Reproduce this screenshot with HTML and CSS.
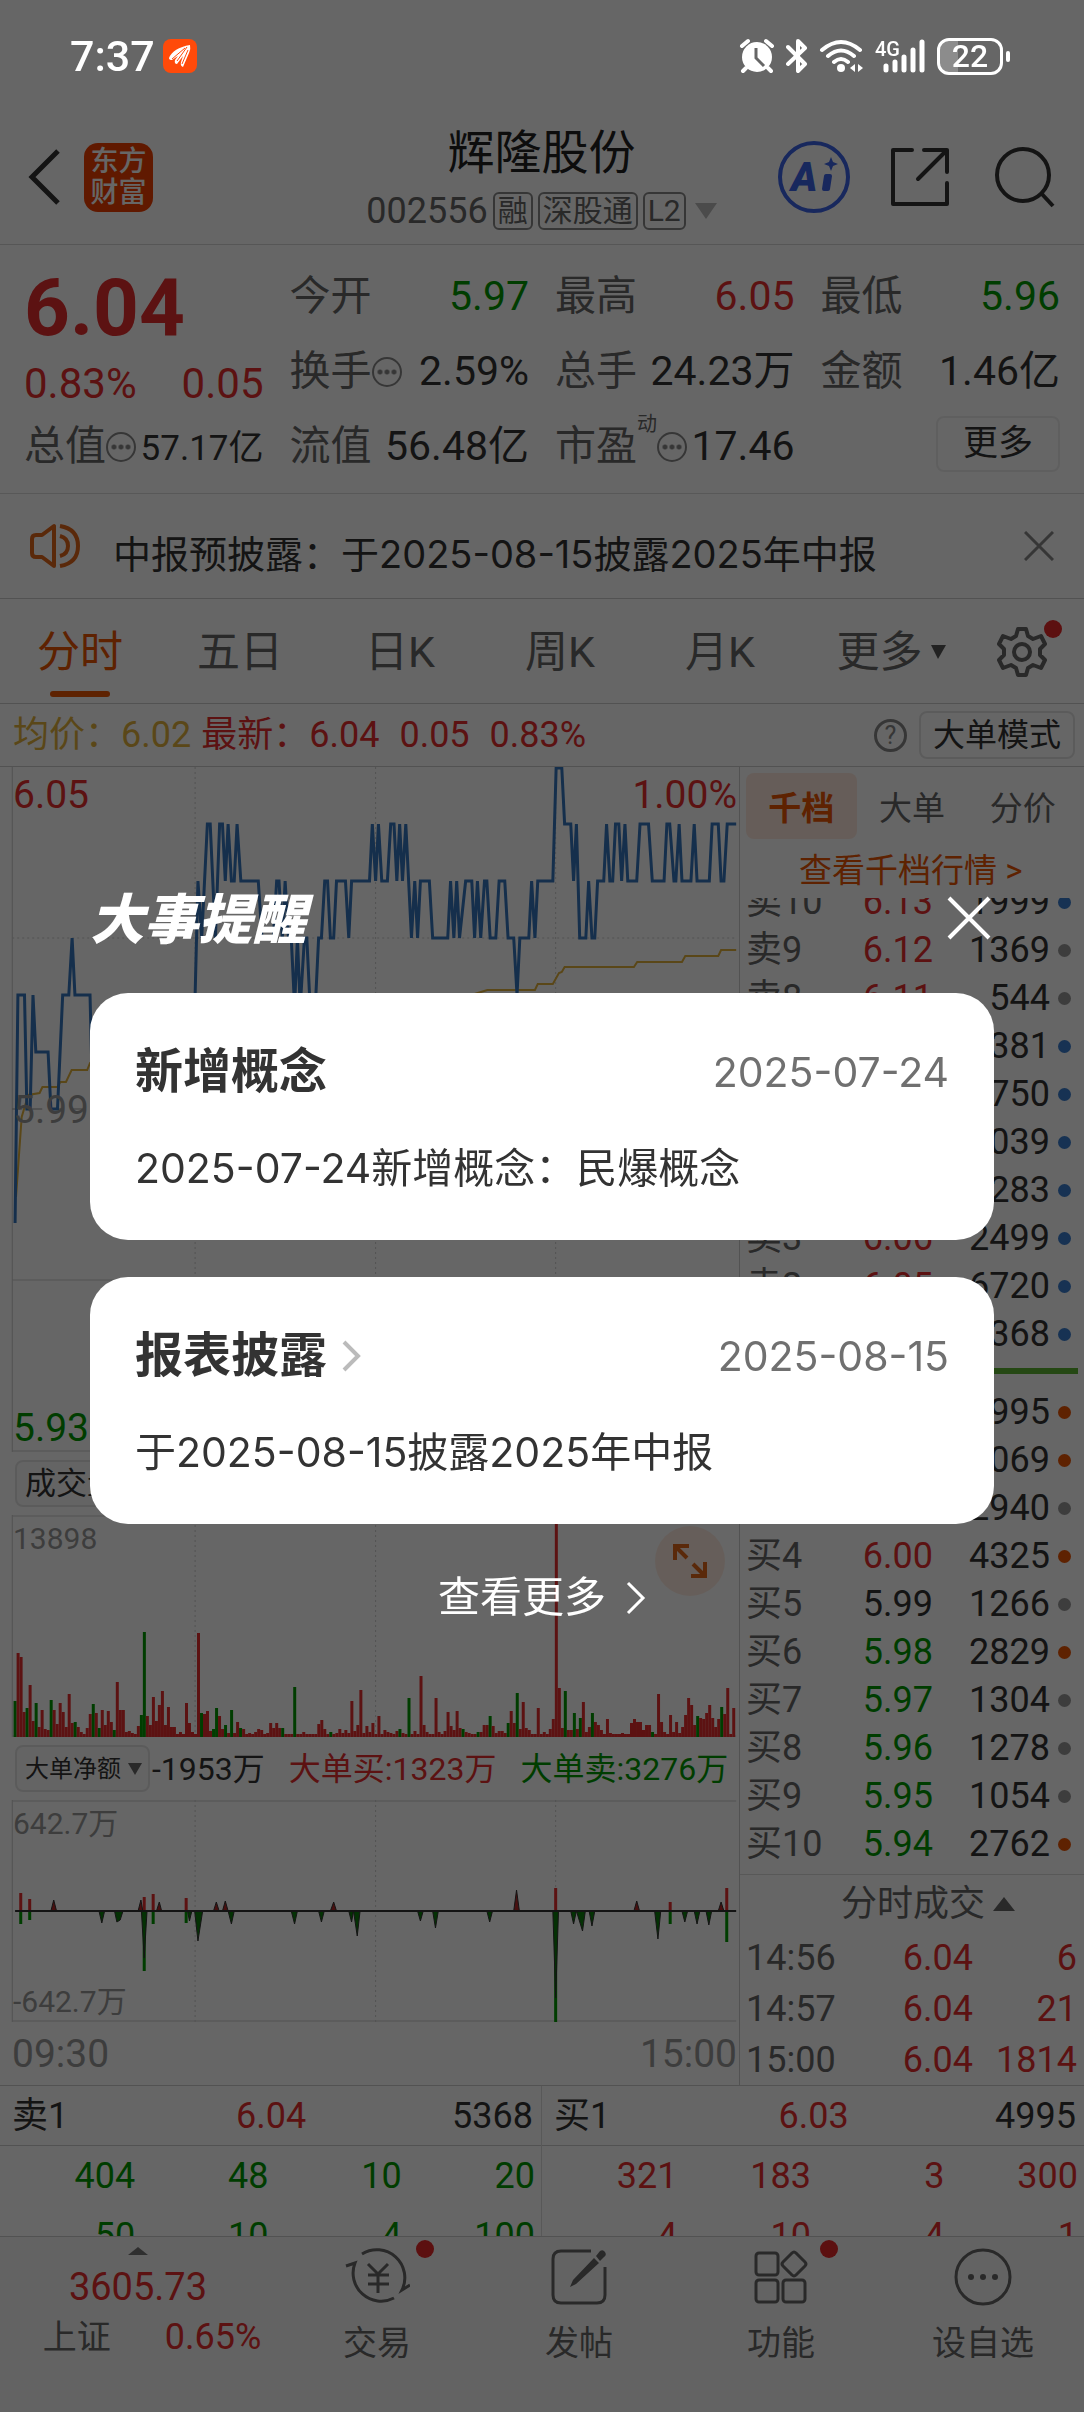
FILE: index.html
```html
<!DOCTYPE html>
<html lang="zh-CN">
<head>
    <meta charset="UTF-8">
    <meta name="viewport" content="width=device-width, initial-scale=1.0">
    <title>辉隆股份 002556</title>
    <link rel="stylesheet" href="styles.css">
</head>
<body>

<div class="status-bar">
    <span class="clock">7:37</span>
    <svg class="app-badge" width="34" height="34" viewBox="0 0 34 34">
        <rect width="34" height="34" rx="8" fill="#ff4a0a"/>
        <path d="M6 19 Q10 9 27 6 Q28 10 26 14 L20 28 Q17 27 18 23 L20 17 L14 25 Q11 25 12 21 L15 17 L9 21 Q6 21 6 19Z" fill="#fff"/>
        <path d="M14 22 L24 8 M19 25 L25 11 M9 20 L22 9" stroke="#ff4a0a" stroke-width="1" fill="none"/>
    </svg>
    <span class="spacer"></span>
    <svg width="36" height="36" viewBox="0 0 36 36">
        <circle cx="18" cy="19" r="15" fill="#fff"/>
        <path d="M3 8 L9 3 M27 3 L33 8 M7 30 L4 33 M29 30 L32 33" stroke="#fff" stroke-width="4" stroke-linecap="round"/>
        <path d="M17 10 V20 L25 28" stroke="#666" stroke-width="3" fill="none"/>
    </svg>
    <svg class="bt" width="22" height="36" viewBox="0 0 22 36">
        <path d="M2 9 L19 26 L12 33 V3 L19 10 L2 26" stroke="#fff" stroke-width="4" fill="none" stroke-linecap="round" stroke-linejoin="round"/>
    </svg>
    <svg width="46" height="36" viewBox="0 0 46 36">
        <path d="M3 12 Q22 -4 41 12 M9 18 Q22 7 35 18 M15 24 Q22 18 29 24" stroke="#fff" stroke-width="4" fill="none" stroke-linecap="round"/>
        <circle cx="22" cy="30" r="4" fill="#fff"/>
        <path d="M36 26 V34 L31 30Z M39 34 V26 L44 30Z" fill="#fff"/>
    </svg>
    <svg class="signal" width="52" height="36" viewBox="0 0 52 36">
        <text x="0" y="18" font-size="20" font-weight="500" fill="#fff">4G</text>
        <path d="M11 28 V32 M20 24 V32 M29 19 V32 M38 12 V32 M47 4 V32" stroke="#fff" stroke-width="5" stroke-linecap="round"/>
    </svg>
    <span class="battery">22</span>
</div>

<div class="app">
    <header class="top">
        <button class="icon-btn back" aria-label="返回">
            <svg width="34" height="58" viewBox="0 0 34 58"><path d="M30 3 L4 29 L30 55" stroke="#333" stroke-width="5" fill="none"/></svg>
        </button>
        <a class="logo" href="#">东方<br>财富</a>
        <div class="title">
            <h1>辉隆股份</h1>
            <p class="code">
                <span>002556</span>
                <span class="badge">融</span><span class="badge">深股通</span><span class="badge">L2</span>
                <svg width="22" height="16" viewBox="0 0 22 16"><path d="M0 0 H22 L11 16Z" fill="#bbb"/></svg>
            </p>
        </div>
        <button class="icon-btn ai" aria-label="AI">
            <svg width="72" height="72" viewBox="0 0 72 72">
                <circle cx="36" cy="36" r="34" fill="none" stroke="#3c64e8" stroke-width="4"/>
                <text x="13" y="50" font-size="40" font-weight="900" font-style="italic" fill="#3c64e8">A</text>
                <path d="M46 48 L48 35 H52 L50 48Z" fill="#3c64e8" stroke="#3c64e8" stroke-width="4" stroke-linejoin="round"/>
                <path d="M53 16 L55 21 L60 23 L55 25 L53 30 L51 25 L46 23 L51 21Z" fill="#3c64e8"/>
            </svg>
        </button>
        <button class="icon-btn" aria-label="分享">
            <svg width="60" height="60" viewBox="0 0 60 60"><path d="M22 3 H3 V57 H57 V36 M34 3 H57 V25 M57 3 L28 32" stroke="#333" stroke-width="4" fill="none" stroke-linejoin="round" stroke-linecap="round"/></svg>
        </button>
        <button class="icon-btn" aria-label="搜索">
            <svg width="62" height="62" viewBox="0 0 62 62"><circle cx="29" cy="29" r="26" stroke="#333" stroke-width="4" fill="none"/><path d="M47 47 L59 60" stroke="#333" stroke-width="4"/></svg>
        </button>
    </header>

    <section class="quote">
        <div class="now">
            <strong>6.04</strong>
            <p><span>0.83%</span><span>0.05</span></p>
        </div>
        <p class="cell"><span>今开</span><b class="down">5.97</b></p>
        <p class="cell"><span>最高</span><b class="up">6.05</b></p>
        <p class="cell"><span>最低</span><b class="down">5.96</b></p>
        <p class="cell"><span>换手<i class="dots"></i></span><b>2.59%</b></p>
        <p class="cell"><span>总手</span><b>24.23万</b></p>
        <p class="cell"><span>金额</span><b>1.46亿</b></p>
        <p class="cell"><span>总值<i class="dots"></i></span><b class="small">57.17亿</b></p>
        <p class="cell"><span>流值</span><b>56.48亿</b></p>
        <p class="cell"><span>市盈<sup>动</sup><i class="dots"></i></span><b>17.46</b></p>
        <p class="cell end"><button class="more">更多</button></p>
    </section>

    <section class="notice">
        <svg width="52" height="46" viewBox="0 0 52 46" fill="none" stroke="#e2661a" stroke-width="4">
            <path d="M24 3 V43 L12 34 H6 Q2 34 2 30 V16 Q2 12 6 12 H12 Z" stroke-linejoin="round"/>
            <path d="M30 13 Q38 15 38 23 Q38 31 30 33 M30 3 Q48 6 48 23 Q48 40 30 43"/>
        </svg>
        <p>中报预披露：于2025-08-15披露2025年中报</p>
        <button class="icon-btn" aria-label="关闭公告">
            <svg width="30" height="30" viewBox="0 0 30 30"><path d="M1 1 L29 29 M29 1 L1 29" stroke="#888" stroke-width="3"/></svg>
        </button>
    </section>

    <nav class="tabs">
        <a class="active" href="#">分时</a>
        <a href="#">五日</a>
        <a href="#">日K</a>
        <a href="#">周K</a>
        <a href="#">月K</a>
        <a class="tab-more" href="#">更多<svg width="15" height="14" viewBox="0 0 15 14"><path d="M0 0 H15 L7 14Z" fill="#555"/></svg></a>
        <button class="icon-btn gear" aria-label="设置">
            <svg width="52" height="52" viewBox="0 0 52 52" fill="none" stroke="#666" stroke-width="4">
                <path d="M22 3 H30 L32 10 L37 13 L45 10 L49 18 L44 23 V29 L49 34 L45 42 L37 39 L32 42 L30 49 H22 L20 42 L15 39 L7 42 L3 34 L8 29 V23 L3 18 L7 10 L15 13 L20 10Z" stroke-linejoin="round"/>
                <circle cx="26" cy="26" r="8"/>
            </svg>
            <span class="red-dot"></span>
        </button>
    </nav>

    <section class="summary">
        <span class="avg">均价：6.02</span>
        <span class="latest">最新：6.04</span>
        <span class="latest">0.05</span>
        <span class="latest">0.83%</span>
        <span class="help">?</span>
        <button>大单模式</button>
    </section>

    <main>
        <div class="charts">
            <div class="chart price">
                <svg viewBox="0 0 1568 685" preserveAspectRatio="none">
                    <g class="grid-lines">
                        <path d="M414 0 V685 M797 0 V685 M1179 0 V685 M26 171 H1562" stroke-dasharray="2 3"/>
                        <path d="M26 0 V685 M26 513 H1562 M26 684 H1562"/>
                    </g>
                    <path class="mid-line" d="M26 342 H1562"/>
                    <path class="avg-line" d="M34 430 L46 350 L60 328 L84 326 L90 320 L122 320 L128 315 L140 315 L152 303 L185 303 L191 296 L300 280 L420 262 L700 240 L1000 228 L1034 223 L1135 223 L1141 217 L1173 217 L1186 206 L1192 205 L1198 200 L1345 200 L1352 195 L1447 195 L1454 189 L1524 189 L1530 183 L1562 183"/>
                    <path class="price-line" d="M32 456 L38 228 L52 228 L57 342 L64 342 L70 228 L76 285 L102 285 L108 342 L122 342 L133 228 L146 228 L153 171 L159 228 L191 228 L197 342 L400 342 L414 228 L420 114 L428 171 L440 57 L446 57 L457 171 L466 57 L472 57 L478 114 L484 57 L491 114 L497 114 L503 57 L511 114 L548 114 L556 171 L580 171 L587 114 L592 114 L599 171 L605 114 L612 171 L618 171 L625 240 L631 171 L637 240 L646 171 L651 171 L658 240 L669 240 L676 171 L682 171 L689 114 L695 114 L701 171 L708 171 L714 114 L733 114 L740 171 L746 114 L784 114 L790 57 L797 114 L803 57 L810 114 L822 114 L829 57 L836 57 L842 114 L848 57 L854 114 L861 57 L873 171 L880 114 L886 171 L892 114 L911 114 L918 171 L950 171 L956 114 L963 171 L969 114 L975 171 L988 114 L1001 114 L1007 171 L1013 114 L1020 171 L1028 114 L1033 114 L1040 171 L1052 171 L1059 114 L1071 114 L1078 171 L1090 171 L1097 228 L1103 171 L1122 171 L1128 114 L1135 171 L1141 114 L1173 114 L1180 1 L1192 1 L1198 57 L1211 57 L1217 114 L1223 57 L1230 171 L1243 171 L1249 114 L1256 171 L1262 171 L1268 114 L1281 114 L1287 57 L1294 114 L1300 114 L1306 57 L1313 57 L1319 114 L1326 57 L1332 114 L1351 114 L1358 57 L1376 57 L1384 114 L1409 114 L1415 57 L1421 57 L1430 114 L1434 114 L1441 57 L1447 114 L1466 114 L1473 57 L1479 114 L1505 114 L1511 57 L1524 57 L1530 114 L1536 114 L1543 57 L1562 57"/>
                </svg>
                <span class="mark top-left up">6.05</span>
                <span class="mark top-right up">1.00%</span>
                <span class="mark middle">5.99</span>
                <span class="mark bottom-left down">5.93</span>
            </div>
            <div class="chart-bar">
                <button class="volume-btn">成交量 <i class="caret"></i></button>
            </div>
            <div class="chart volume">
                <svg id="volume" viewBox="0 0 1568 222" preserveAspectRatio="none">
                    <g class="grid-lines">
                        <path d="M414 0 V222 M797 0 V222 M1179 0 V222" stroke-dasharray="2 3"/>
                        <path d="M26 0 V222 M26 1 H1562 M26 221 H1562"/>
                    </g>
                </svg>
                <span class="mark small top-left">13898</span>
                <button class="expand" aria-label="展开">
                    <svg width="34" height="34" viewBox="0 0 34 34" fill="none" stroke="#e2661a" stroke-width="4"><path d="M2 16 V2 H16 M2 2 L14 14 M32 18 V32 H18 M32 32 L20 20"/></svg>
                </button>
            </div>
            <div class="chart-bar">
                <button>大单净额 <i class="caret"></i></button>
                <span>-1953万</span>
                <span class="up">大单买:1323万</span>
                <span class="down">大单卖:3276万</span>
            </div>
            <div class="chart flow">
                <svg viewBox="0 0 1568 222" preserveAspectRatio="none">
                    <g class="grid-lines">
                        <path d="M414 0 V222 M797 0 V222 M1179 0 V222" stroke-dasharray="2 3"/>
                        <path d="M26 0 V222 M26 1 H1562 M26 221 H1562"/>
                    </g>
                    <path class="buy" d="M44 111 V93 M63 111 V99 M306 111 V97 M325 111 V94 M395 111 V98 M1179 111 V88 M1422 111 V102 M1542 111 V88"/>
                    <path class="sell" d="M44 111 V124 M63 111 V120 M306 111 V171 M325 111 V124 M395 111 V123 M1179 111 V222 M1422 111 V124 M1542 111 V142"/>
                    <path class="net-buy" d="M108 111 L114 100 L120 111 M293 111 L299 100 L303 111 M332 111 L338 102 L343 111 M453 111 L459 102 L465 111 M472 111 L478 101 L484 111 M701 111 L708 102 L714 111 M1090 111 L1096 90 L1102 111 M1345 111 L1351 101 L1357 111 M1524 111 L1530 102 L1536 111"/>
                    <path class="net-sell" d="M210 111 L216 123 L222 111 M243 111 L248 122 L255 120 L261 111 M300 111 L306 158 L312 111 M398 111 L402 121 L407 111 M413 111 L420 141 L430 111 M484 111 L491 124 L497 111 M618 111 L625 124 L631 111 M676 111 L682 122 L688 111 M740 111 L746 122 L750 111 L758 136 L764 111 M886 111 L892 121 L898 111 M918 111 L924 128 L930 111 M1033 111 L1039 122 L1045 111 M1173 111 L1179 198 L1185 111 M1211 111 L1217 124 L1223 111 L1236 131 L1242 111 M1250 111 L1256 126 L1262 111 M1389 111 L1396 139 L1402 111 M1447 111 L1453 122 L1459 111 M1473 111 L1479 124 L1485 111 M1498 111 L1504 125 L1510 111"/>
                    <path class="zero-line" d="M32 111 H1562"/>
                </svg>
                <span class="mark small top-left">642.7万</span>
                <span class="mark small bottom-left">-642.7万</span>
            </div>
            <p class="times"><span>09:30</span><span>15:00</span></p>
        </div>

        <aside class="book">
            <div class="book-tabs">
                <button class="active">千档</button><button>大单</button><button>分价</button>
            </div>
            <a class="depth-link" href="#">查看千档行情 &gt;</a>
            <div class="asks">
                <table>
                    <tr><th>卖10</th><td class="up">6.13</td><td>1999</td><td><i class="dot blue"></i></td></tr>
                    <tr><th>卖9</th><td class="up">6.12</td><td>1369</td><td><i class="dot"></i></td></tr>
                    <tr><th>卖8</th><td class="up">6.11</td><td>544</td><td><i class="dot"></i></td></tr>
                    <tr><th>卖7</th><td class="up">6.10</td><td>2381</td><td><i class="dot blue"></i></td></tr>
                    <tr><th>卖6</th><td class="up">6.09</td><td>1750</td><td><i class="dot blue"></i></td></tr>
                    <tr><th>卖5</th><td class="up">6.08</td><td>3039</td><td><i class="dot blue"></i></td></tr>
                    <tr><th>卖4</th><td class="up">6.07</td><td>3283</td><td><i class="dot blue"></i></td></tr>
                    <tr><th>卖3</th><td class="up">6.06</td><td>2499</td><td><i class="dot blue"></i></td></tr>
                    <tr><th>卖2</th><td class="up">6.05</td><td>6720</td><td><i class="dot blue"></i></td></tr>
                    <tr><th>卖1</th><td class="up">6.04</td><td>5368</td><td><i class="dot blue"></i></td></tr>
                </table>
            </div>
            <div class="ratio"></div>
            <table>
                <tr><th>买1</th><td class="up">6.03</td><td>4995</td><td><i class="dot orange"></i></td></tr>
                <tr><th>买2</th><td class="up">6.02</td><td>3069</td><td><i class="dot orange"></i></td></tr>
                <tr><th>买3</th><td class="up">6.01</td><td>2940</td><td><i class="dot"></i></td></tr>
                <tr><th>买4</th><td class="up">6.00</td><td>4325</td><td><i class="dot orange"></i></td></tr>
                <tr><th>买5</th><td>5.99</td><td>1266</td><td><i class="dot"></i></td></tr>
                <tr><th>买6</th><td class="down">5.98</td><td>2829</td><td><i class="dot orange"></i></td></tr>
                <tr><th>买7</th><td class="down">5.97</td><td>1304</td><td><i class="dot"></i></td></tr>
                <tr><th>买8</th><td class="down">5.96</td><td>1278</td><td><i class="dot"></i></td></tr>
                <tr><th>买9</th><td class="down">5.95</td><td>1054</td><td><i class="dot"></i></td></tr>
                <tr><th>买10</th><td class="down">5.94</td><td>2762</td><td><i class="dot orange"></i></td></tr>
            </table>
            <h2>分时成交<svg width="22" height="14" viewBox="0 0 22 14"><path d="M0 14 H22 L11 0Z" fill="#666"/></svg></h2>
            <table class="trades">
                <tr><th>14:56</th><td>6.04</td><td>6</td></tr>
                <tr><th>14:57</th><td>6.04</td><td>21</td></tr>
                <tr><th>15:00</th><td>6.04</td><td>1814</td></tr>
            </table>
        </aside>
    </main>

    <section class="queue">
        <div class="side">
            <p class="level"><span>卖1</span><b class="up">6.04</b><span>5368</span></p>
            <table class="down">
                <tr><td>404</td><td>48</td><td>10</td><td>20</td></tr>
                <tr><td>50</td><td>10</td><td>4</td><td>100</td></tr>
            </table>
        </div>
        <div class="side">
            <p class="level"><span>买1</span><b class="up">6.03</b><span>4995</span></p>
            <table class="up">
                <tr><td>321</td><td>183</td><td>3</td><td>300</td></tr>
                <tr><td>4</td><td>10</td><td>4</td><td>1</td></tr>
            </table>
        </div>
    </section>

    <nav class="bottom">
        <a class="index" href="#">
            <svg width="20" height="8" viewBox="0 0 20 8"><path d="M0 8 H20 L10 0Z" fill="#777"/></svg>
            <b class="up">3605.73</b>
            <span>上证<em class="up">0.65%</em></span>
        </a>
        <a href="#">
            <svg width="66" height="60" viewBox="0 0 66 60" fill="none" stroke="#666" stroke-width="3">
                <path d="M18 7 A28 28 0 0 1 58 43 L66 38 M50 51 A28 28 0 0 1 11 16 L2 19"/>
                <path d="M24 17 L34 27 L44 17 M24 28 H45 M24 37 H45 M34 27 V46"/>
            </svg>
            <span>交易</span>
            <i class="red-dot"></i>
        </a>
        <a href="#">
            <svg width="58" height="60" viewBox="0 0 58 60">
                <path d="M41 4 H11 Q3 4 3 12 V48 Q3 56 11 56 H47 Q55 56 55 48 V20" fill="none" stroke="#666" stroke-width="3"/>
                <path d="M44 11 L49 16 L26 37 L20 40 L23 33Z M46 9 L50 4 Q53 2 55 5 Q57 8 54 10 L50 14Z" fill="#666"/>
            </svg>
            <span>发帖</span>
        </a>
        <a href="#">
            <svg width="58" height="60" viewBox="0 0 58 60" fill="none" stroke="#666" stroke-width="3">
                <rect x="4" y="6" width="22" height="22" rx="3"/>
                <rect x="4" y="33" width="22" height="22" rx="3"/>
                <rect x="31" y="33" width="22" height="22" rx="3"/>
                <path d="M40 6 Q42 4 44 6 L53 15 Q55 17 53 19 L44 28 Q42 30 40 28 L31 19 Q29 17 31 15Z"/>
            </svg>
            <span>功能</span>
            <i class="red-dot"></i>
        </a>
        <a href="#">
            <svg width="58" height="60" viewBox="0 0 58 60"><circle cx="29" cy="30" r="27" fill="none" stroke="#666" stroke-width="3"/><g fill="#666"><circle cx="17" cy="30" r="3"/><circle cx="29" cy="30" r="3"/><circle cx="41" cy="30" r="3"/></g></svg>
            <span>设自选</span>
        </a>
    </nav>
</div>

<div class="overlay">
    <div class="dialog" role="dialog" aria-labelledby="dialogTitle">
        <div class="dialog-head">
            <h2 id="dialogTitle">大事提醒</h2>
            <button class="icon-btn" aria-label="关闭">
                <svg width="44" height="44" viewBox="0 0 44 44"><path d="M2 2 L42 42 M42 2 L2 42" stroke="#fff" stroke-width="4"/></svg>
            </button>
        </div>
        <article class="card">
            <div class="card-head"><h3>新增概念</h3><time>2025-07-24</time></div>
            <p>2025-07-24新增概念：民爆概念</p>
        </article>
        <article class="card">
            <div class="card-head">
                <h3>报表披露</h3>
                <svg width="20" height="32" viewBox="0 0 20 32"><path d="M3 2 L17 16 L3 30" fill="none" stroke="#bbb" stroke-width="4"/></svg>
                <time>2025-08-15</time>
            </div>
            <p>于2025-08-15披露2025年中报</p>
        </article>
        <a class="see-more" href="#">查看更多
            <svg width="20" height="34" viewBox="0 0 20 34"><path d="M2 2 L17 17 L2 32" fill="none" stroke="#fff" stroke-width="3"/></svg>
        </a>
    </div>
</div>

<script src="script.js"></script>
</body>
</html>
```
FILE: styles.css
```css
* {
    box-sizing: border-box;
}
body {
    margin: 0;
    font-family: Roboto, "Noto Sans CJK SC", sans-serif;
    font-size: 36px;
    color: #333;
    background: #fff;
}
h1, h2, h3, p {
    margin: 0;
    font-weight: 400;
}
b, th, em, i {
    font-weight: 400;
    font-style: normal;
}
a {
    color: inherit;
    text-decoration: none;
}
button {
    font: inherit;
    color: inherit;
    padding: 0;
    background: none;
    border: 0;
}
svg {
    display: block;
    flex-shrink: 0;
}
table {
    width: 100%;
    border-collapse: collapse;
    table-layout: fixed;
}
th, td {
    padding: 0;
    text-align: right;
}
.up {
    color: #e62e2e;
}
.down {
    color: #090;
}
.icon-btn {
    display: flex;
}
.spacer {
    flex: 1;
}
.red-dot {
    position: absolute;
    width: 18px;
    height: 18px;
    border-radius: 50%;
    background: #e62828;
}

/* status bar stays bright above the overlay */
.status-bar {
    position: fixed;
    z-index: 3;
    left: 0;
    right: 0;
    top: 0;
    display: flex;
    align-items: center;
    padding: 30px 81px 0 70px;
    height: 82px;
    color: #fff;
}
.clock {
    font-size: 43px;
    line-height: 52px;
    font-weight: 500;
}
.app-badge {
    margin-left: 8px;
}
.bt {
    margin: 0 11px;
}
.signal {
    margin: 0 10px;
}
.battery {
    position: relative;
    width: 66px;
    height: 37px;
    border: 3px solid #fff;
    border-radius: 12px;
    font-size: 32px;
    line-height: 31px;
    font-weight: 500;
    text-align: center;
    background: linear-gradient(90deg, #8c8c8c 30%, transparent 30%);
}
.battery::after {
    content: "";
    position: absolute;
    right: -10px;
    top: 10px;
    width: 4px;
    height: 11px;
    border-radius: 2px;
    background: #fff;
}

.app {
    height: 100vh;
    display: flex;
    flex-direction: column;
    overflow: hidden;
}
.top {
    display: flex;
    align-items: center;
    gap: 44px;
    padding: 110px 28px 0;
    border-bottom: 1px solid #d8d8d8;
    height: 245px;
    flex-shrink: 0;
}
.back {
    margin-right: -22px;
}
.logo {
    width: 69px;
    height: 69px;
    border-radius: 14px;
    background: #f04000;
    color: #fff;
    font-size: 28px;
    line-height: 31px;
    padding: 3px 0;
    text-align: center;
    font-weight: 500;
    flex-shrink: 0;
}
.title {
    flex: 1;
    padding-left: 148px;
    padding-top: 4px;
    text-align: center;
}
.title h1 {
    font-size: 47px;
    line-height: 64px;
    color: #222;
}
.code {
    display: flex;
    align-items: center;
    justify-content: center;
    gap: 5px;
    color: #666;
    line-height: 52px;
    white-space: nowrap;
}
.badge {
    border: 2px solid #888;
    border-radius: 6px;
    font-size: 30px;
    line-height: 34px;
    padding: 0 3px;
}
.code svg {
    margin-left: 4px;
}
.ai {
    margin: 0 -4px;
}

.quote {
    display: grid;
    grid-template-columns: repeat(4, 1fr);
    grid-auto-rows: 75px;
    column-gap: 26px;
    padding: 14px 24px 9px;
    border-bottom: 1px solid #ddd;
}
.now {
    grid-row: span 2;
    color: #e62e2e;
    font-size: 42px;
}
.now strong {
    display: block;
    font-size: 80px;
    line-height: 98px;
    font-weight: 700;
}
.now p, .cell {
    display: flex;
    align-items: baseline;
    justify-content: space-between;
}
.now p {
    line-height: 54px;
}
.cell {
    font-size: 41px;
    line-height: 75px;
    white-space: nowrap;
}
.cell span {
    display: flex;
    align-items: baseline;
    color: #666;
}
.cell .small {
    font-size: 35px;
}
.cell sup {
    font-size: 20px;
    align-self: flex-start;
    line-height: 30px;
}
.dots {
    align-self: center;
    width: 30px;
    height: 30px;
    border: 2px solid #888;
    border-radius: 50%;
    background: radial-gradient(circle, #888 2px, transparent 3px) center / 7px 26px repeat-x content-box;
    padding: 0 2px;
}
.cell.end {
    justify-content: flex-end;
    align-items: center;
}
.more {
    width: 124px;
    height: 56px;
    margin-bottom: 6px;
    font-size: 35px;
    line-height: 48px;
    border: 2px solid #eee;
    border-radius: 8px;
}

.notice {
    display: flex;
    align-items: center;
    gap: 31px;
    height: 105px;
    flex-shrink: 0;
    padding: 0 30px;
    border-bottom: 1px solid #ccc;
}
.notice p {
    flex: 1;
    font-family: Inter, "Noto Sans CJK SC", sans-serif;
    font-size: 38px;
    padding-top: 10px;
}

.tabs {
    display: grid;
    grid-template-columns: repeat(5, 160fr) 182fr 102fr;
    flex-shrink: 0;
    height: 105px;
    border-bottom: 1px solid #ccc;
    color: #666;
    font-size: 43px;
    line-height: 106px;
}
.tabs a {
    position: relative;
    text-align: center;
}
.tabs .active {
    color: #ea5504;
}
.tabs .active::after {
    content: "";
    position: absolute;
    left: 50%;
    bottom: 8px;
    width: 60px;
    margin-left: -30px;
    height: 6px;
    border-radius: 3px;
    background: #ea5504;
}
.tabs .tab-more {
    display: flex;
    align-items: center;
    justify-content: center;
    gap: 8px;
}
.gear {
    position: relative;
    align-items: center;
    padding-left: 14px;
}
.gear .red-dot {
    left: 62px;
    top: 21px;
}

.summary {
    display: flex;
    align-items: baseline;
    height: 63px;
    flex-shrink: 0;
    padding: 0 9px 0 13px;
    gap: 20px;
    line-height: 62px;
    border-bottom: 1px solid #ccc;
}
.summary .avg {
    color: #e2b13c;
    margin-right: -10px;
}
.latest {
    color: #e62e2e;
}
.help {
    align-self: center;
    margin-left: auto;
    margin-right: -8px;
    width: 33px;
    height: 33px;
    border: 3px solid #888;
    border-radius: 50%;
    font-size: 25px;
    line-height: 28px;
    text-align: center;
    color: #888;
}
.summary button {
    align-self: center;
    height: 48px;
    width: 156px;
    font-size: 32px;
    line-height: 44px;
    border: 2px solid #e4e4e4;
    border-radius: 8px;
}

main {
    display: grid;
    grid-template-columns: 739fr 345fr;
    flex-shrink: 0;
    border-bottom: 1px solid #ccc;
}
.chart {
    position: relative;
}
.chart svg {
    width: 100%;
    height: 100%;
}
.chart path {
    fill: none;
    vector-effect: non-scaling-stroke;
}
.price {
    height: 685px;
}
.volume, .flow {
    height: 222px;
}
.grid-lines path {
    stroke: #ccc;
    stroke-width: 1px;
}
.chart .mid-line {
    stroke: #999;
    stroke-dasharray: 10 10;
}
.chart .price-line {
    stroke: #3575bd;
    stroke-width: 3px;
}
.chart .avg-line {
    stroke: #e2b13c;
    stroke-width: 2px;
}
.chart .bar-up, .chart .buy {
    stroke: #e62e2e;
    stroke-width: 3px;
}
.chart .bar-down, .chart .sell {
    stroke: #090;
    stroke-width: 3px;
}
.chart .net-buy {
    fill: #b32828;
    stroke: #333;
}
.chart .net-sell {
    fill: #0a7a0a;
    stroke: #333;
}
.chart .zero-line {
    stroke: #333;
    stroke-width: 2px;
}
.mark {
    position: absolute;
    font-size: 39px;
    line-height: 48px;
}
.mark.small {
    font-size: 30px;
    line-height: 40px;
}
.mark:not(.up):not(.down) {
    color: #999;
}
.top-left {
    left: 13px;
    top: 4px;
}
.top-right {
    right: 2px;
    top: 4px;
}
.bottom-left {
    left: 13px;
    bottom: 0;
}
.price .middle {
    left: 13px;
    top: 50%;
    margin-top: -24px;
    color: #777;
}
.chart-bar {
    display: flex;
    align-items: center;
    gap: 24px;
    height: 63px;
    padding-left: 15px;
    font-size: 32px;
    line-height: 40px;
    white-space: nowrap;
}
.chart-bar button {
    display: flex;
    align-items: center;
    gap: 7px;
    height: 47px;
    padding: 0 6px 0 8px;
    margin-right: -22px;
    font-size: 24px;
    border: 2px solid #e4e4e4;
    border-radius: 8px;
    background: #fafafa;
}
.chart-bar .volume-btn {
    font-size: 31px;
}
.caret {
    border: 7px solid transparent;
    border-top: 12px solid #666;
    border-bottom: 0;
}
.expand {
    position: absolute;
    right: 14px;
    top: 11px;
    width: 70px;
    height: 70px;
    padding: 18px;
    border-radius: 50%;
    background: #ffece2;
}
.times {
    display: flex;
    justify-content: space-between;
    height: 62px;
    padding: 0 2px 0 12px;
    font-size: 39px;
    line-height: 64px;
    color: #999;
}

.book {
    border-left: 1px solid #ccc;
}
.book-tabs {
    display: flex;
    padding: 6px 6px 0;
    font-size: 33px;
}
.book-tabs button {
    flex: 1;
    height: 66px;
    color: #666;
}
.book-tabs .active {
    color: #ea5504;
    font-weight: 700;
    background: #ffe9de;
    border-radius: 8px;
}
.depth-link {
    display: block;
    height: 59px;
    padding-left: 59px;
    font-size: 33px;
    line-height: 64px;
    color: #ea5504;
}
.asks {
    display: flex;
    flex-direction: column;
    justify-content: flex-end;
    height: 460px;
    overflow: hidden;
}
.book tr {
    height: 48px;
}
.book th {
    width: 90px;
    padding-left: 6px;
    text-align: left;
    color: #666;
}
.book td, .book th {
    line-height: 48px;
}
.book td:nth-child(2) {
    width: 103px;
}
.book td:nth-child(3) {
    width: 117px;
}
.dot {
    display: block;
    width: 13px;
    height: 13px;
    margin-left: 8px;
    border-radius: 50%;
    background: #999;
}
.dot.blue {
    background: #3a7ecf;
}
.dot.orange {
    background: #ea5504;
}
.ratio {
    height: 6px;
    margin: 10px 6px 14px;
    background: #5cb533;
}
.book h2 {
    display: flex;
    align-items: center;
    justify-content: center;
    gap: 8px;
    height: 58px;
    margin-top: 6px;
    padding-left: 32px;
    font-size: 36px;
    line-height: 54px;
    color: #666;
    border-top: 1px solid #ddd;
}
.trades td {
    color: #e62e2e;
}
.book .trades tr {
    height: 51px;
}
.trades th {
    width: 110px;
}
.book .trades td:nth-child(2) {
    width: 143px;
}
.book .trades th {
    width: 90px;
}
.book .trades td:nth-child(3) {
    width: auto;
    padding-right: 7px;
}

.queue {
    display: grid;
    grid-template-columns: 1fr 1fr;
    flex: 1;
    min-height: 0;
    overflow: hidden;
}
.side {
    border-right: 1px solid #ddd;
}
.side:last-child {
    border-right: 0;
}
.level {
    display: flex;
    justify-content: space-between;
    height: 60px;
    padding: 0 8px 0 12px;
    line-height: 60px;
    border-bottom: 1px solid #ccc;
}
.level b {
    padding-left: 22px;
}
.side table {
    width: calc(100% - 8px);
    margin-left: 8px;
}
.side td {
    height: 60px;
    padding-right: 6px;
}

.bottom {
    display: grid;
    grid-template-columns: 276fr repeat(4, 202fr);
    flex-shrink: 0;
    height: 176px;
    border-top: 1px solid #ccc;
    background: #f8f8f8;
    color: #666;
    font-size: 34px;
}
.bottom a {
    position: relative;
    display: flex;
    flex-direction: column;
    align-items: center;
    padding-top: 10px;
}
.bottom span {
    margin-top: 11px;
    line-height: 50px;
}
.bottom .red-dot {
    left: 50%;
    top: 3px;
    margin-left: 39px;
}
.bottom b {
    font-size: 38px;
    line-height: 50px;
    margin-top: 7px;
}
.bottom .index span {
    display: flex;
    gap: 54px;
    margin-top: 0;
    padding-left: 28px;
}
.bottom em {
    font-size: 36px;
}

.overlay {
    position: fixed;
    z-index: 2;
    inset: 0;
    display: flex;
    align-items: center;
    padding: 108px 90px 0;
    background: rgba(0, 0, 0, 0.6);
}
.dialog {
    flex: 1;
}
.dialog-head {
    display: flex;
    justify-content: space-between;
    align-items: center;
    height: 50px;
    margin-bottom: 50px;
    padding-right: 3px;
    color: #fff;
}
.dialog-head h2 {
    padding-top: 6px;
    font-size: 54px;
    line-height: 50px;
    font-weight: 900;
    font-style: italic;
}
.card {
    padding: 47px 45px 42px;
    margin-bottom: 37px;
    border-radius: 38px;
    background: #fff;
}
.card-head {
    display: flex;
    align-items: center;
    gap: 14px;
    margin-bottom: 34px;
}
.card h3 {
    font-size: 48px;
    line-height: 64px;
    font-weight: 700;
}
.card time {
    margin-left: auto;
    color: #707070;
    font-family: Inter, sans-serif;
    font-size: 41px;
}
.card p {
    font-family: Inter, "Noto Sans CJK SC", sans-serif;
    font-size: 41px;
    line-height: 60px;
}
.see-more {
    display: flex;
    align-items: center;
    justify-content: center;
    gap: 20px;
    margin-top: 44px;
    font-size: 42px;
    line-height: 60px;
    color: #fff;
}
```
FILE: script.js
```js
// one bar per minute, negative = falling minute
let volumes = [
    -36, 84, 80, 25, -29, 52, 16, -34, 10, 27, 8, 7, -37, 27, 13, 34, 25, 10, 43, 14,
    -15, 10, 5, 3, 9, 23, -33, 24, -9, 27, 12, 26, 15, -7, 55, 27, 27, 5, 6, 4,
    3, 11, -22, -105, 21, 12, 40, 16, 32, 46, 12, 30, 10, 10, 3, 5, 3, 34, 14, 5,
    3, 104, -24, 23, 26, 6, -8, -29, 21, 8, -12, 4, -27, 4, 15, -9, 8, 3, 4, 3,
    5, 8, 7, 3, 4, 14, 9, 14, 9, -9, 3, 3, 3, -50, 3, 3, 5, 3, 3, 3,
    3, 13, 17, 8, 3, -5, 3, 4, 8, 4, 7, 4, 36, 6, 12, 47, 4, 11, 5, 14,
    3, 21, 3, 7, 5, 4, 3, 6, -8, 4, 3, -39, 3, 6, 3, 61, 12, 5, 3, 3,
    39, 5, 3, 6, 25, 11, 7, 26, 9, -8, 5, 4, 3, 3, -5, 5, 12, 12, -21, 11,
    4, 6, 6, 4, -14, 26, 14, -44, 8, 35, 9, 7, 3, 3, 29, 3, 5, 3, 8, 18,
    222, 49, 9, -46, 7, 7, -24, 8, -19, 35, 5, 10, -24, 15, 12, 7, 3, 18, 4, 3,
    3, 3, 4, 3, 3, 14, 18, 15, 15, 7, 12, 12, -5, 3, 43, 15, 5, 3, 22, 5,
    15, 4, 10, 22, 39, 32, 12, -21, 19, 18, 24, 32, 19, 10, 18, -30, 23, 49, 3, 29
];

let svg = document.getElementById("volume");
volumes.forEach((v, i) => {
    let bar = document.createElementNS("http://www.w3.org/2000/svg", "path");
    let x = 32 + i * 6.38;
    bar.setAttribute("d", `M${x.toFixed(1)} 222 V${222 - Math.abs(v)}`);
    bar.setAttribute("class", v < 0 ? "bar-down" : "bar-up");
    svg.appendChild(bar);
});
```
